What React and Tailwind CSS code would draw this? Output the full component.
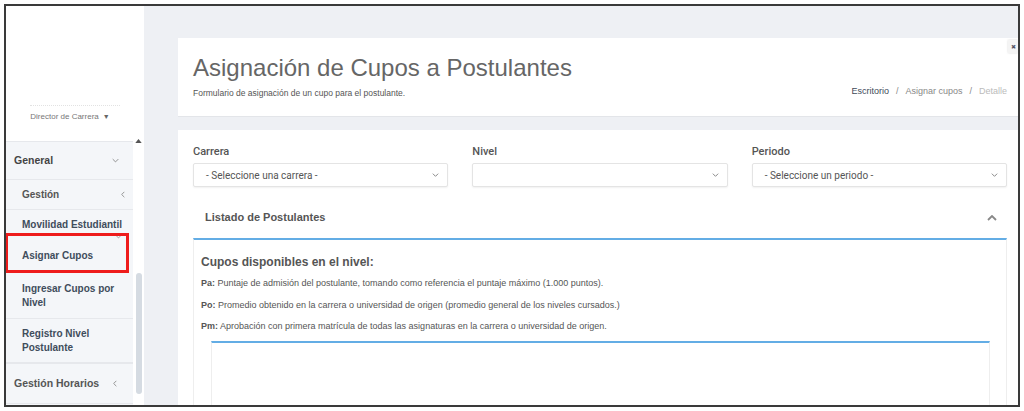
import React from "react";

const font = { fontFamily: '"Liberation Sans", Arial, sans-serif' };

function ChevronDown({ className = "" }) {
  return (
    <svg viewBox="0 0 10 6" className={className} fill="none" stroke="currentColor" strokeWidth="1.3">
      <path d="M1 1l4 4 4-4" />
    </svg>
  );
}

function ChevronLeft({ className = "" }) {
  return (
    <svg viewBox="0 0 6 10" className={className} fill="none" stroke="currentColor" strokeWidth="1.3">
      <path d="M5 1L1 5l4 4" />
    </svg>
  );
}

function ChevronUp({ className = "" }) {
  return (
    <svg viewBox="0 0 10 6" className={className} fill="none" stroke="currentColor" strokeWidth="1.8">
      <path d="M1 5l4-4 4 4" />
    </svg>
  );
}

function Sidebar() {
  return (
    <div className="w-[138px] flex flex-col shrink-0 bg-white">
      <div className="h-[131px] shrink-0 flex flex-col justify-end items-center pb-[14px]">
        <div className="w-[90px] border-t border-dotted border-[#e2e2e2] mb-[5px]" />
        <div className="text-[8px] text-[#777] flex items-center gap-[4px] mr-[10px]">
          Director de Carrera
          <span className="text-[7px] text-[#666]">▼</span>
        </div>
      </div>
      <div className="flex-1 flex bg-[#f4f6f9] min-h-0">
        <div className="flex-1 flex flex-col">
          <div className="h-[5px] shrink-0 bg-white border-b border-[#e6e8ec]" />
          <div className="h-[38px] shrink-0 flex items-center justify-between pl-[8px] pr-[14px] border-b border-[#e6e8ec]">
            <span className="text-[10.5px] font-bold text-[#444]">General</span>
            <ChevronDown className="w-[7px] h-[5px] text-[#888]" />
          </div>
          <div className="h-[30px] shrink-0 flex items-center justify-between pl-[16px] pr-[8px] border-b border-[#e6e8ec]">
            <span className="text-[10px] font-bold text-[#555]">Gestión</span>
            <ChevronLeft className="w-[4px] h-[7px] text-[#888]" />
          </div>
          <div className="h-[23px] shrink-0 flex items-end pl-[16px] pb-[1px]">
            <span className="text-[10px] font-bold text-[#3f4d5c] whitespace-nowrap">Movilidad Estudiantil</span>
          </div>
          <div className="relative h-[40px] shrink-0 flex items-center pl-[16px] pt-[4px]">
            <ChevronDown className="absolute right-[11px] top-[1px] w-[7px] h-[5px] text-[#999]" />
            <span className="text-[10px] font-bold text-[#3f4d5c]">Asignar Cupos</span>
            <div className="absolute inset-0 -left-[1px] right-[4px] border-[3px] border-[#ee1c1c]" />
          </div>
          <div className="h-[46px] shrink-0 flex flex-col justify-center pl-[16px] border-b border-[#e6e8ec] leading-[14px]">
            <span className="text-[10px] font-bold text-[#3f4d5c]">Ingresar Cupos por</span>
            <span className="text-[10px] font-bold text-[#3f4d5c]">Nivel</span>
          </div>
          <div className="h-[45px] shrink-0 flex flex-col justify-center pl-[16px] border-b-2 border-[#e6e8ec] leading-[14px]">
            <span className="text-[10px] font-bold text-[#3f4d5c]">Registro Nivel</span>
            <span className="text-[10px] font-bold text-[#3f4d5c]">Postulante</span>
          </div>
          <div className="h-[40px] shrink-0 flex items-center justify-between pl-[8px] pr-[16px] border-b border-[#e6e8ec]">
            <span className="text-[10.5px] font-bold text-[#555]">Gestión Horarios</span>
            <ChevronLeft className="w-[4px] h-[7px] text-[#888]" />
          </div>
        </div>
        <div className="w-[11px] bg-white flex flex-col items-center pt-[2px]">
          <svg viewBox="0 0 8 5" className="w-[7px] h-[4px] text-[#555]" fill="currentColor">
            <path d="M0 5L4 0l4 5z" />
          </svg>
          <div className="mt-[130px] w-[6px] h-[121px] rounded-[3px] bg-[#d5dbe2]" />
        </div>
      </div>
    </div>
  );
}

function Select({ text }) {
  return (
    <div
      className="h-[24px] flex items-center justify-between pl-[12px] pr-[8px] bg-white border border-[#e4e4e4] rounded-[2px] shadow-[0_1px_2px_rgba(0,0,0,0.06)]"
      style={{ fontFamily: 'Roboto, "Liberation Sans", sans-serif' }}
    >
      <span className="text-[10px] text-[#555]">{text}</span>
      <ChevronDown className="w-[7px] h-[4px] text-[#777]" />
    </div>
  );
}

function Field({ label, text }) {
  return (
    <div className="flex flex-col">
      <div
        className="text-[11px] font-medium text-[#555] h-[18px] mb-[1px]"
        style={{ fontFamily: 'Roboto, "Liberation Sans", sans-serif' }}
      >
        {label}
      </div>
      <Select text={text} />
    </div>
  );
}

export default function App() {
  return (
    <div className="w-[1024px] h-[411px] bg-white p-[4px]" style={font}>
      <div className="w-full h-full border-2 border-[#3a3a3a] flex overflow-hidden">
        <Sidebar />
        <div className="flex-1 bg-[#eef0f4] pl-[34px] pt-[32px] flex flex-col min-h-0">
          <div className="relative h-[79px] shrink-0 bg-white border-b border-[#e3e5e9] flex justify-between pl-[15px] pr-[11px]">
            <div className="pt-[15px]">
              <h1 className="text-[24px] text-[#666] leading-[30px]">
                Asignación de Cupos a Postulantes
              </h1>
              <p className="text-[8.5px] text-[#555] mt-[4px]">Formulario de asignación de un cupo para el postulante.</p>
            </div>
            <div className="pt-[47px] text-[9px] flex gap-[7px]">
              <span className="text-[#3e4b5a]">Escritorio</span>
              <span className="text-[#888]">/</span>
              <span className="text-[#888]">Asignar cupos</span>
              <span className="text-[#888]">/</span>
              <span className="text-[#bbb]">Detalle</span>
            </div>
            <div className="absolute right-0 top-[2px] w-[10px] h-[13px] bg-[#f4f4f4] shadow-[0_0_2px_rgba(0,0,0,0.15)] flex items-center justify-center">
              <span className="text-[6px] text-[#556] leading-none">✖</span>
            </div>
          </div>
          <div className="flex-1 min-h-0 overflow-hidden mt-[13px] bg-white pl-[15px] pr-[11px] pt-[14px]">
            <div className="grid grid-cols-3 gap-[24px]">
              <Field label="Carrera" text="- Seleccione una carrera -" />
              <Field label="Nivel" text="" />
              <Field label="Periodo" text="- Seleccione un periodo -" />
            </div>
            <div className="h-[51px] flex items-center justify-between pl-[12px] pr-[10px] pt-[10px]">
              <span className="text-[11px] font-bold text-[#555]">Listado de Postulantes</span>
              <ChevronUp className="w-[10px] h-[6px] text-[#888]" />
            </div>
            <div className="border-t-2 border-[#63ade5] border-x border-x-[#eeeeee] h-[200px] pl-[7px] pr-[16px]">
              <div className="text-[12px] font-bold text-[#555] mt-[13px]">Cupos disponibles en el nivel:</div>
              <div className="text-[9px] leading-[12px] text-[#555] mt-[6px] flex flex-col gap-[9.5px]">
                <p><b>Pa:</b> Puntaje de admisión del postulante, tomando como referencia el puntaje máximo (1.000 puntos).</p>
                <p><b>Po:</b> Promedio obtenido en la carrera o universidad de origen (promedio general de los niveles cursados.)</p>
                <p><b>Pm:</b> Aprobación con primera matrícula de todas las asignaturas en la carrera o universidad de origen.</p>
              </div>
              <div className="ml-[10px] mt-[9px] h-[80px] border-t-2 border-[#63ade5] border-x border-x-[#eeeeee]" />
            </div>
          </div>
        </div>
      </div>
    </div>
  );
}
